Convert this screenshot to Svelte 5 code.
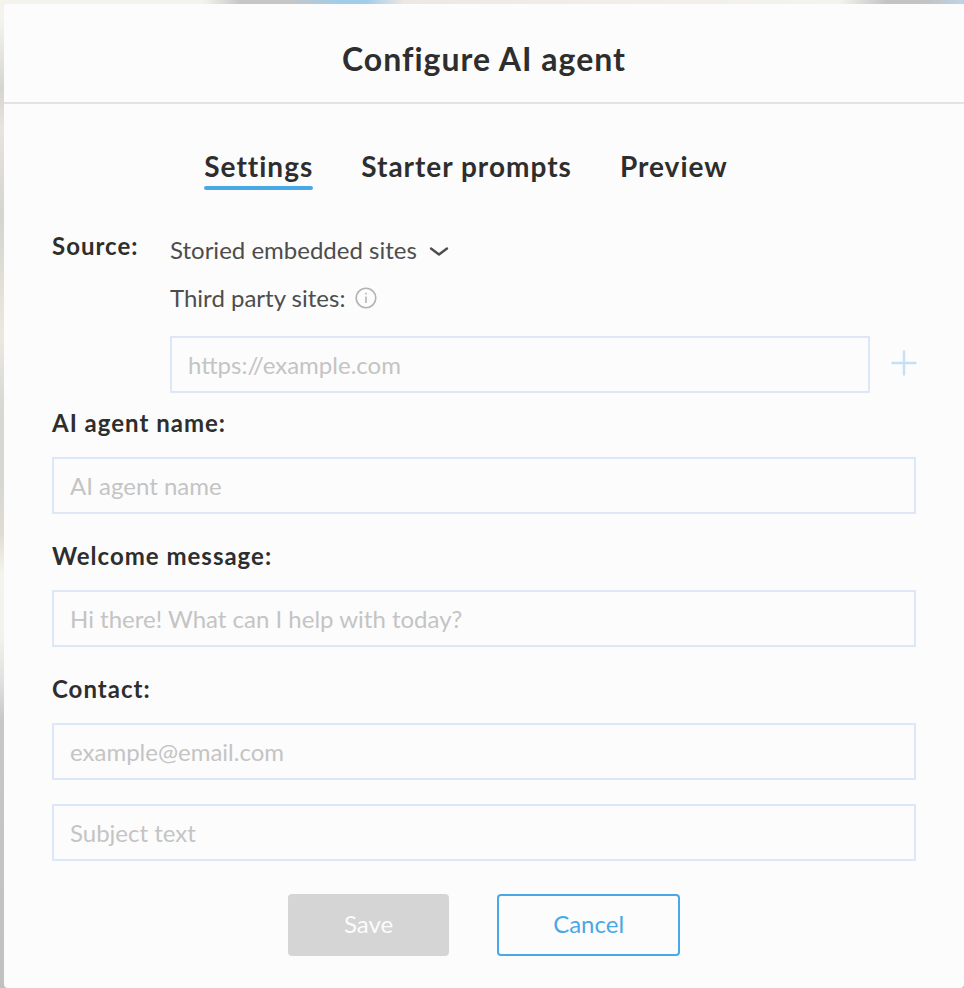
<script>
  let tab = $state('settings');
  let source = $state('embedded');
  let siteUrl = $state('');
  let agentName = $state('');
  let welcome = $state('');
  let email = $state('');
  let subject = $state('');

  const tabs = [
    { id: 'settings', label: 'Settings' },
    { id: 'prompts', label: 'Starter prompts' },
    { id: 'preview', label: 'Preview' }
  ];

  let canSave = $derived(agentName.trim() !== '' && email.trim() !== '');
</script>

<main class="backdrop">
  <form class="modal" onsubmit={(e) => e.preventDefault()}>
    <header>
      <h1>Configure AI agent</h1>
    </header>

    <div class="body">
      <nav class="tabs">
        {#each tabs as t (t.id)}
          <button type="button" class="tab" class:active={tab === t.id} onclick={() => (tab = t.id)}>
            {t.label}
          </button>
        {/each}
      </nav>

      <div class="source">
        <label class="title" for="source">Source:</label>
        <div class="source-fields">
          <div class="picker">
            <select id="source" bind:value={source}>
              <option value="embedded">Storied embedded sites</option>
            </select>
            <svg class="chevron" width="20" height="16" viewBox="0 0 20 16" aria-hidden="true">
              <path d="M2 6.5L10 12.5L18 6.5" />
            </svg>
          </div>
          <div class="third-party">
            <label for="site-url">Third party sites:</label>
            <svg class="info" width="22" height="22" viewBox="0 0 22 22" aria-hidden="true">
              <circle cx="11" cy="11" r="9.8" />
              <path d="M11 9.5V16M11 5.8V7.6" />
            </svg>
          </div>
          <div class="url-row">
            <input id="site-url" placeholder="https://example.com" bind:value={siteUrl} />
            <button type="button" class="add" aria-label="Add site" disabled={!siteUrl}>
              <svg width="26" height="26" viewBox="0 0 26 26" aria-hidden="true">
                <path d="M13 1.5V24.5M1.5 13H24.5" />
              </svg>
            </button>
          </div>
        </div>
      </div>

      <div class="field">
        <label class="title" for="agent-name">AI agent name:</label>
        <input id="agent-name" placeholder="AI agent name" bind:value={agentName} />
      </div>

      <div class="field">
        <label class="title" for="welcome">Welcome message:</label>
        <input id="welcome" placeholder="Hi there! What can I help with today?" bind:value={welcome} />
      </div>

      <div class="field contact">
        <label class="title" for="email">Contact:</label>
        <input id="email" type="email" placeholder="example@email.com" bind:value={email} />
      </div>
      <input aria-label="Subject" placeholder="Subject text" bind:value={subject} />

      <div class="actions">
        <button type="submit" class="btn save" disabled={!canSave}>Save</button>
        <button type="button" class="btn cancel">Cancel</button>
      </div>
    </div>
  </form>
</main>

<style>
  :global(body) {
    margin: 0;
  }

  .backdrop,
  .backdrop * {
    box-sizing: border-box;
  }

  .backdrop {
    min-height: 100vh;
    padding: 4px 0 0 4px;
    font-family: Lato, 'Liberation Sans', sans-serif;
    font-size: 24px;
    line-height: 32px;
    color: #4d4d4d;
    background:
      linear-gradient(to right, #f5f4ec 21%, #c6c6c6 25%, #c6c6c6 30%, #a2cde9 35%, #a2cde9 38%, #efe8e2 42%, #f4f3ee 87%, #c3c3c3 92%, #c3c3c3 96%, #bdd4e5) top / 100% 4px no-repeat,
      linear-gradient(#f5f4ec 2%, #d6d4ce 9%, #e6e4dc 13%, #d5d4cd 22%, #ebe9df 34%, #d8d7d3 41%, #d6d5d1 48%, #dfddd3 54%, #f5f4ec 58%, #f4f3eb 64%, #e0e0e0 69%, #c7c7c7 73%, #c1c1c1);
  }

  .modal {
    min-height: calc(100vh - 4px);
    background: #fcfcfc;
    border-radius: 4px;
  }

  header {
    padding: 35px 24px 23px;
    border-bottom: 2px solid #e3e3e3;
    text-align: center;
  }

  h1 {
    margin: 0;
    font-size: 32px;
    line-height: 40px;
    letter-spacing: 1px;
    color: #2e2e2e;
  }

  .body {
    padding: 44px 48px 32px;
  }

  button,
  select,
  input {
    font: inherit;
    color: inherit;
  }

  .tabs {
    display: flex;
    justify-content: center;
    gap: 48px;
    padding-right: 36px;
    margin-bottom: 40px;
  }

  .tab {
    padding: 0;
    border: 0;
    background: none;
    font-size: 28px;
    font-weight: 700;
    line-height: 36px;
    letter-spacing: 1px;
    color: #2e2e2e;
    cursor: pointer;
  }

  .tab::after {
    content: '';
    display: block;
    height: 4px;
    margin-top: 2px;
    border-radius: 2px;
  }

  .tab.active::after {
    background: #4aa8e6;
  }

  .title {
    font-weight: 700;
    letter-spacing: 1px;
    color: #2e2e2e;
  }

  .source {
    display: flex;
    align-items: flex-start;
    margin-bottom: 14px;
  }

  .source .title {
    width: 118px;
  }

  .source-fields {
    flex: 1;
  }

  .picker,
  .third-party {
    display: flex;
    align-items: center;
  }

  .picker {
    gap: 12px;
    padding-top: 4px;
    margin-bottom: 16px;
  }

  .third-party {
    gap: 10px;
    margin-bottom: 22px;
  }

  select {
    appearance: none;
    padding: 0;
    border: 0;
    background: none;
    field-sizing: content;
  }

  .chevron {
    fill: none;
    stroke: #4d4d4d;
    stroke-width: 2.4;
    stroke-linecap: round;
    stroke-linejoin: round;
  }

  .info {
    fill: none;
    stroke: #b3b3b3;
    stroke-width: 1.6;
  }

  .url-row {
    display: flex;
    align-items: center;
    gap: 21px;
  }

  input {
    width: 100%;
    height: 57px;
    padding: 0 16px;
    border: 2px solid #dce8f7;
    border-radius: 0;
    background: transparent;
  }

  input::placeholder {
    color: #c4c4c4;
    opacity: 1;
  }

  .add {
    display: flex;
    padding: 0 0 4px;
    margin-right: -1px;
    border: 0;
    background: none;
  }

  .add svg {
    fill: none;
    stroke: #c3e0f5;
    stroke-width: 2.4;
    stroke-linecap: round;
  }

  .field {
    display: grid;
    gap: 18px;
    margin-bottom: 26px;
  }

  .contact {
    margin-bottom: 24px;
  }

  .actions {
    display: flex;
    justify-content: center;
    gap: 48px;
    margin-top: 33px;
  }

  .btn {
    height: 62px;
    padding: 0 54px 2px;
    border: 2px solid #4aa8e6;
    border-radius: 4px;
    background: transparent;
    color: #4aa8e6;
    cursor: pointer;
  }

  .save:disabled {
    border-color: #d5d5d5;
    background: #d5d5d5;
    color: #fcfcfc;
    cursor: default;
  }
</style>
